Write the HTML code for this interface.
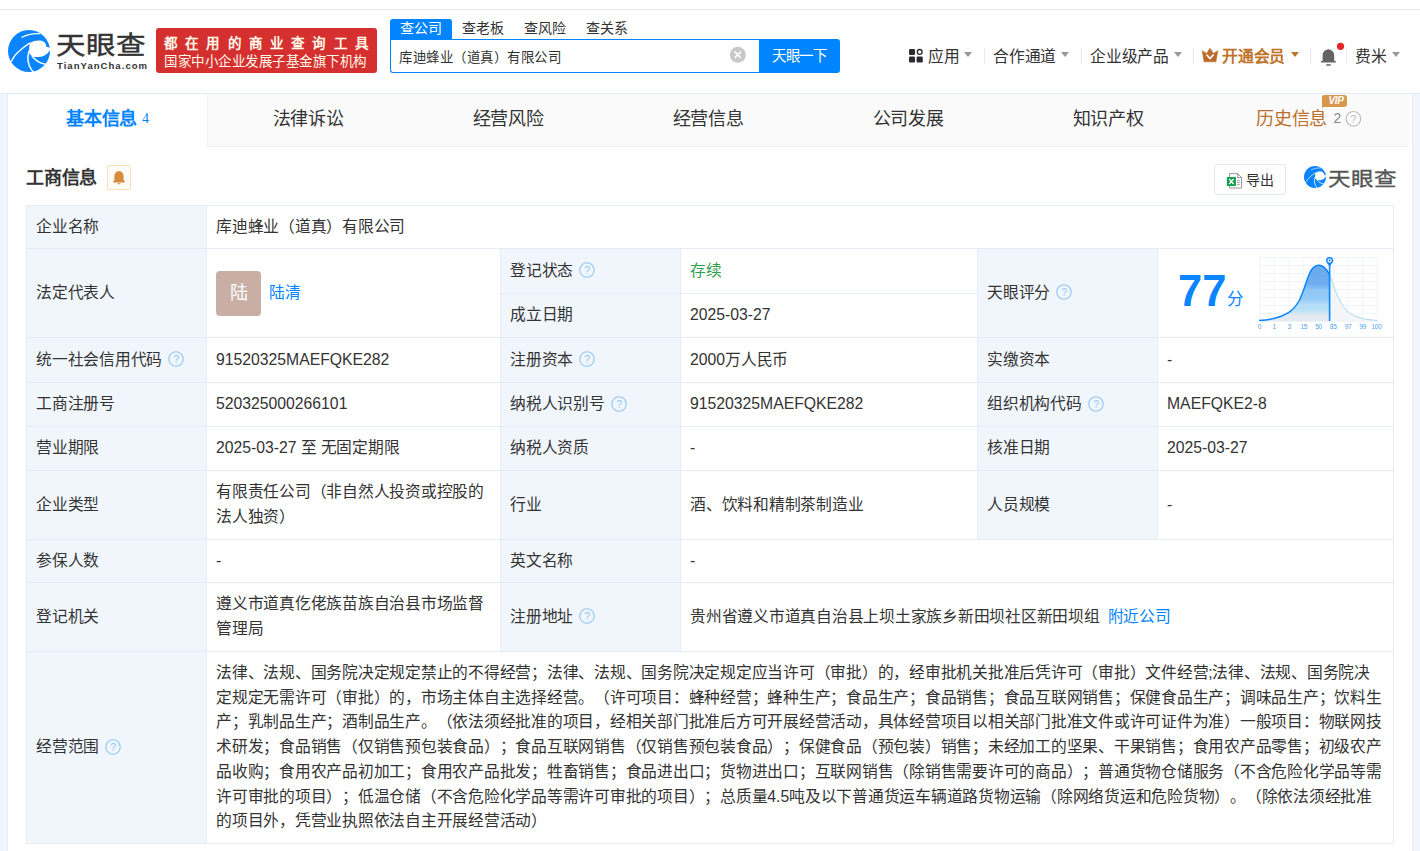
<!DOCTYPE html>
<html lang="zh-CN"><head><meta charset="utf-8">
<style>
*{margin:0;padding:0;box-sizing:border-box}
html,body{width:1420px;height:851px;overflow:hidden;background:#fff}
body{font-family:"Liberation Sans",sans-serif;color:#333;font-size:15.75px;letter-spacing:-0.25px;position:relative;text-spacing-trim:space-all}
.abs{position:absolute}
.topline{left:0;top:9px;width:1420px;height:1px;background:#e3eaf2}
.topshadow{left:0;top:10px;width:1420px;height:2px;background:linear-gradient(#f6f8fb,#fff)}
.strip{top:93px;width:8px;height:758px;background:#f0f6fc}
/* header */
.logo-c{left:8px;top:30px;width:42px;height:42px}
.logo-t{left:56px;top:30.5px;font-size:29.5px;line-height:34px;color:#333;letter-spacing:0;font-weight:normal;-webkit-text-stroke:0.5px #333;white-space:nowrap;transform:scaleY(0.86);transform-origin:0 0}
.logo-s{left:57px;top:60px;font-size:9.5px;line-height:11px;font-weight:bold;letter-spacing:1.05px;color:#333;white-space:nowrap}
.banner{left:156px;top:28px;width:221px;height:45px;background:#d62f2f;border-radius:3px;color:#fff}
.banner .l1{position:absolute;left:8px;top:4px;font-size:13.5px;font-weight:bold;letter-spacing:8.2px;white-space:nowrap;color:#fffbea}
.banner .l2{position:absolute;left:8px;top:21.5px;font-size:13.5px;letter-spacing:0.5px;white-space:nowrap;color:#fffbea;font-weight:500}
.stab{top:19px;height:20px;width:62px;font-size:14px;letter-spacing:-0.2px;line-height:18px;text-align:center;color:#333}
.stab.on{background:#0084ff;color:#fff;border-radius:3px 3px 0 0}
.sbox{left:390px;top:39px;width:370px;height:34px;border:1px solid #0084ff;border-right:none;border-radius:0 0 0 3px}
.sbox .txt{position:absolute;left:8px;top:7.5px;font-size:13.5px;letter-spacing:0.5px;line-height:20px;white-space:nowrap}
.sbtn{left:759px;top:39px;width:81px;height:34px;background:#0084ff;border-radius:0 3px 3px 0;color:#fff;font-size:14.5px;letter-spacing:-0.1px;line-height:34px;text-align:center}
.nav{top:45.5px;font-size:15.75px;line-height:22px;white-space:nowrap;color:#333}
.caret{width:0;height:0;border-left:4.5px solid transparent;border-right:4.5px solid transparent;border-top:5.5px solid #999}
.sep{top:49px;width:1px;height:14px;background:#e4e8ee}
/* tabs */
.tabbar{left:8px;top:93px;width:1401px;height:54px;background:#fafafa;border-top:1px solid #e3eaf2;border-bottom:1px solid #eef2f7}
.tab{top:0;height:53px;width:200px;text-align:center;font-size:18px;line-height:50px;color:#333;white-space:nowrap}
.tab.on{background:#fff;color:#0084ff;font-weight:bold;border-right:1px solid #edf2f8}
.cardr{left:1412px;top:93px;width:1px;height:758px;background:#e5ecf3}
.cardl{left:7px;top:93px;width:1px;height:758px;background:#e5ecf3}
/* section */
.stitle{left:26px;top:165px;font-size:18px;font-weight:bold;color:#333;line-height:26px}
.bellbtn{left:107px;top:165px;width:24px;height:25px;border:1px solid #fce0b3;background:#fdfcf8;border-radius:2px}
.export{left:1214px;top:164px;width:72px;height:31px;border:1px solid #e3e8ef;border-radius:3px;font-size:13.5px}
/* table */
.tb{left:26px;top:205px;width:1368px;height:639px;border:1px solid #e4eaf1}
.c{position:absolute;display:flex;align-items:center;padding-left:9px;line-height:24.75px}
.lb{background:#f1f6fd}
.q{display:inline-block;width:16px;height:16px;margin-left:6px;vertical-align:top;position:relative;top:3.5px}
.n{letter-spacing:0}
a{color:#0084ff;text-decoration:none}
.ln{position:absolute;background:#e6ecf3}
.avatar{width:45px;height:45px;border-radius:4px;background:#c9aea5;color:#fff;font-size:18px;text-align:center;line-height:45px;margin-left:0;position:relative;top:0.5px}
.lq{margin-left:8px}
.score{left:1178px;top:266.5px;font-size:43.5px;font-weight:bold;color:#0a84ff;letter-spacing:0;line-height:48px}
.fen{left:1227px;top:289px;font-size:16.5px;color:#0a84ff;line-height:20px}
</style></head><body>
<div class="abs topline"></div>
<div class="abs topshadow"></div>
<div class="abs strip" style="left:0"></div>
<div class="abs strip" style="left:1413px;width:7px"></div>
<div class="abs cardl"></div>
<div class="abs cardr"></div>
<div class="abs" style="left:0;top:93px;width:1420px;height:1px;background:#e3eaf2"></div>

<!-- HEADER -->
<svg width="0" height="0" style="position:absolute"><defs><symbol id="tyc" viewBox="4 4 42 42">
<circle cx="25" cy="25" r="21" fill="#0a84ff"/>
<path d="M25.9,17 C29,15 33,14.2 36.5,14.6 C40,15.2 42.6,17.6 42.3,20.8 L47,22 L52,18 L52,30 L46.5,23.2 C44.5,27.5 40,30.6 35,31 C31.5,31.2 29.3,30.8 28.2,30 C26.5,28.8 25.2,27.5 25.2,25.9 C25.1,22.5 25.3,19 25.9,17 Z" fill="#fff"/>
<path d="M17.5,11.6 C22,9 30,7.2 36.6,7.7" fill="none" stroke="#fff" stroke-width="1.1"/>
<path d="M7.2,35.8 C9.5,31 12,27.8 14.7,25.6 C18,22.5 22,19 26.3,16.8" fill="none" stroke="#fff" stroke-width="1.3"/>
<path d="M25.4,24.5 C24,28 23.6,32 24.2,35.5 C24.8,39.5 26.8,43.5 29.6,46.5" fill="none" stroke="#fff" stroke-width="1.5"/>
<path d="M27.8,29.6 C29.5,32.2 31.5,34 34,35.6 C36.5,37 39,37.9 41.6,38.2" fill="none" stroke="#fff" stroke-width="1.5"/>
</symbol></defs></svg>
<svg class="abs logo-c"><use href="#tyc"/></svg>
<div class="abs logo-t">天眼查</div>
<div class="abs logo-s">TianYanCha.com</div>
<div class="abs banner"><div class="l1">都在用的商业查询工具</div><div class="l2">国家中小企业发展子基金旗下机构</div></div>

<div class="abs stab on" style="left:390px">查公司</div>
<div class="abs stab" style="left:452px">查老板</div>
<div class="abs stab" style="left:514px">查风险</div>
<div class="abs stab" style="left:576px">查关系</div>
<div class="abs sbox"><div class="txt">库迪蜂业（道真）有限公司</div></div>
<div class="abs sbtn">天眼一下</div>

<div class="abs nav" style="left:928px">应用</div>
<div class="abs nav" style="left:993px">合作通道</div>
<div class="abs nav" style="left:1090px">企业级产品</div>
<div class="abs nav" style="left:1222px;color:#c0732a;font-weight:bold">开通会员</div>
<div class="abs nav" style="left:1355px">费米</div>
<div class="abs sep" style="left:984px"></div>
<div class="abs sep" style="left:1081px"></div>
<div class="abs sep" style="left:1193px"></div>
<div class="abs sep" style="left:1310px"></div>
<div class="abs sep" style="left:1346px"></div>
<div class="abs caret" style="left:964px;top:52px"></div>
<div class="abs caret" style="left:1061px;top:52px"></div>
<div class="abs caret" style="left:1174px;top:52px"></div>
<div class="abs caret" style="left:1291px;top:52px;border-top-color:#c0732a"></div>
<div class="abs caret" style="left:1392px;top:52px"></div>


<svg class="abs" style="left:905px;top:44px" width="22" height="22" viewBox="905 44 22 22">
<rect x="909" y="49" width="6" height="6" rx="1.3" fill="#2b2b30"/>
<rect x="909" y="56.5" width="6" height="6" rx="1.3" fill="#2b2b30"/>
<rect x="916.6" y="56.5" width="6.2" height="6" rx="1.3" fill="#2b2b30"/>
<circle cx="919.7" cy="51.9" r="2.4" fill="none" stroke="#2b2b30" stroke-width="1.3"/>
</svg>
<svg class="abs" style="left:1198px;top:44px" width="24" height="22" viewBox="1198 44 24 22">
<path d="M1202.2,50.8 L1206.6,53.6 L1210,48.2 L1213.4,53.6 L1217.8,50.8 L1215.9,61.8 L1204.1,61.8 Z" fill="#bb6c2c" stroke="#bb6c2c" stroke-width="0.6" stroke-linejoin="round"/>
<path d="M1206.4,54.6 L1210,58.6 L1213.6,54.6" fill="none" stroke="#fff" stroke-width="1.5"/>
</svg>
<svg class="abs" style="left:1315px;top:40px" width="32" height="30" viewBox="1315 40 32 30">
<path d="M1328.4,47.8 L1328.4,49.2 C1325,49.6 1322.6,52 1322.6,55.5 L1322.6,61.1 L1321,61.1 L1321,62.6 L1335.8,62.6 L1335.8,61.1 L1334.2,61.1 L1334.2,55.5 C1334.2,52 1331.8,49.6 1328.4,49.2 Z" fill="#646464"/>
<rect x="1326.3" y="64.2" width="4.4" height="1.5" fill="#646464"/>
<circle cx="1340.5" cy="46.3" r="3.6" fill="#e02626"/>
</svg>
<svg class="abs" style="left:728px;top:45px" width="20" height="20" viewBox="728 45 20 20">
<circle cx="737.8" cy="54.8" r="8" fill="#c8c8c8"/>
<path d="M734.6,51.6 L741,58 M741,51.6 L734.6,58" stroke="#fff" stroke-width="1.6"/>
</svg>

<!-- TABS -->
<div class="abs tabbar">
<div class="abs tab on" style="left:0">基本信息 <span style="font-weight:normal;font-size:14px;font-family:'Liberation Serif',serif;position:relative;top:-2px">4</span></div>
<div class="abs tab" style="left:200px">法律诉讼</div>
<div class="abs tab" style="left:400px">经营风险</div>
<div class="abs tab" style="left:600px">经营信息</div>
<div class="abs tab" style="left:800px">公司发展</div>
<div class="abs tab" style="left:1000px">知识产权</div>
<div class="abs tab" style="left:1248px;width:auto;color:#bb6f2b">历史信息<span style="font-size:14px;color:#888;margin-left:6.5px;position:relative;top:-2px">2</span></div>
</div>


<div class="abs" style="left:1322px;top:95px;width:25px;height:11.5px;background:#d9974b;border-radius:2px 3px 3px 0"></div>
<svg class="abs" style="left:1320px;top:104px" width="6" height="6" viewBox="0 0 6 6"><path d="M2,0 L2,4.5 L6,0 Z" fill="#d9974b"/></svg>
<div class="abs" style="left:1326px;top:95px;width:20px;font-size:10px;line-height:12px;font-weight:bold;font-style:italic;color:#fff;letter-spacing:-0.3px;text-align:center">VIP</div>
<svg class="abs" style="left:1345px;top:110px" width="17" height="17" viewBox="1345 110 17 17">
<circle cx="1353.4" cy="118.8" r="7.3" fill="none" stroke="#bdbdbd" stroke-width="1.1"/>
<text x="1353.4" y="122.6" text-anchor="middle" font-size="10.5" fill="#bdbdbd" font-family="Liberation Sans">?</text>
</svg>

<!-- SECTION -->
<div class="abs stitle">工商信息</div>
<div class="abs bellbtn"></div>
<svg class="abs" style="left:104px;top:162px" width="30" height="30" viewBox="104 162 30 30">
<path d="M1,0" />
<path d="M119,169.8 L119,171 C116,171.3 114.4,173.6 114.4,176.6 L114.4,180.2 L113.2,181.4 L113.2,182.4 L124.8,182.4 L124.8,181.4 L123.6,180.2 L123.6,176.6 C123.6,173.6 122,171.3 119,171 Z" fill="#d98a3a"/><rect x="117.6" y="183.2" width="2.8" height="1" fill="#d98a3a"/>
</svg>
<div class="abs export">
<svg style="position:absolute;left:10px;top:6px" width="18" height="18" viewBox="1224 170 18 18">
<path d="M1228.6,172.6 L1236.6,172.6 L1240.6,176.6 L1240.6,187 L1228.6,187 Z" fill="#fff" stroke="#8a8a8a" stroke-width="0.9"/>
<path d="M1236.6,172.6 L1236.6,176.6 L1240.6,176.6" fill="none" stroke="#8a8a8a" stroke-width="0.9"/>
<path d="M1236,179.4 h2.8 M1236,181.4 h2.8 M1236,183.4 h2.8" stroke="#8a8a8a" stroke-width="0.8"/>
<rect x="1225.9" y="176" width="9" height="9" fill="#11a04f"/>
<path d="M1228.2,178 L1232.6,183 M1232.6,178 L1228.2,183" stroke="#fff" stroke-width="1.3"/>
</svg>
<div style="position:absolute;left:31px;top:6px;font-size:14px;line-height:18px;letter-spacing:0">导出</div>
</div>
<svg class="abs" style="left:1304px;top:166px" width="22" height="22"><use href="#tyc"/></svg>
<div class="abs" style="left:1328px;top:168.5px;font-size:22.5px;line-height:26px;font-weight:normal;-webkit-text-stroke:0.4px #555;color:#555;letter-spacing:0;white-space:nowrap;transform:scaleY(0.86);transform-origin:0 0">天眼查</div>


<!-- TABLE -->
<div class="c lb" style="left:27px;top:206px;width:179px;height:42px;"><div class="in">企业名称</div></div>
<div class="c" style="left:207px;top:206px;width:1186px;height:42px;"><div class="in">库迪蜂业（道真）有限公司</div></div>
<div class="c lb" style="left:27px;top:249px;width:179px;height:88px;"><div class="in">法定代表人</div></div>
<div class="c" style="left:207px;top:249px;width:293px;height:88px;"><div class="in"><div style="display:flex;align-items:center"><div class="avatar">陆</div><a class="lq">陆清</a></div></div></div>
<div class="c lb" style="left:501px;top:249px;width:179px;height:44px;"><div class="in">登记状态<svg class="q" viewBox="0 0 16 16"><circle cx="8" cy="8" r="7.2" fill="none" stroke="#8fc6f4" stroke-width="1.1"/><text x="8" y="12" text-anchor="middle" font-size="10.5" fill="#8fc6f4" font-family="Liberation Sans">?</text></svg></div></div>
<div class="c" style="left:681px;top:249px;width:296px;height:44px;"><div class="in"><span style="color:#2fa04d">存续</span></div></div>
<div class="c lb" style="left:501px;top:294px;width:179px;height:43px;"><div class="in">成立日期</div></div>
<div class="c" style="left:681px;top:294px;width:296px;height:43px;"><div class="in"><span class="n">2025-03-27</span></div></div>
<div class="c lb" style="left:978px;top:249px;width:179px;height:88px;"><div class="in">天眼评分<svg class="q" viewBox="0 0 16 16"><circle cx="8" cy="8" r="7.2" fill="none" stroke="#8fc6f4" stroke-width="1.1"/><text x="8" y="12" text-anchor="middle" font-size="10.5" fill="#8fc6f4" font-family="Liberation Sans">?</text></svg></div></div>
<div class="c" style="left:1158px;top:249px;width:235px;height:88px;"><div class="in"></div></div>
<div class="c lb" style="left:27px;top:338px;width:179px;height:44px;"><div class="in">统一社会信用代码<svg class="q" viewBox="0 0 16 16"><circle cx="8" cy="8" r="7.2" fill="none" stroke="#8fc6f4" stroke-width="1.1"/><text x="8" y="12" text-anchor="middle" font-size="10.5" fill="#8fc6f4" font-family="Liberation Sans">?</text></svg></div></div>
<div class="c" style="left:207px;top:338px;width:293px;height:44px;"><div class="in"><span class="n">91520325MAEFQKE282</span></div></div>
<div class="c lb" style="left:501px;top:338px;width:179px;height:44px;"><div class="in">注册资本<svg class="q" viewBox="0 0 16 16"><circle cx="8" cy="8" r="7.2" fill="none" stroke="#8fc6f4" stroke-width="1.1"/><text x="8" y="12" text-anchor="middle" font-size="10.5" fill="#8fc6f4" font-family="Liberation Sans">?</text></svg></div></div>
<div class="c" style="left:681px;top:338px;width:296px;height:44px;"><div class="in"><span class="n">2000</span>万人民币</div></div>
<div class="c lb" style="left:978px;top:338px;width:179px;height:44px;"><div class="in">实缴资本</div></div>
<div class="c" style="left:1158px;top:338px;width:235px;height:44px;"><div class="in">-</div></div>
<div class="c lb" style="left:27px;top:383px;width:179px;height:43px;"><div class="in">工商注册号</div></div>
<div class="c" style="left:207px;top:383px;width:293px;height:43px;"><div class="in"><span class="n">520325000266101</span></div></div>
<div class="c lb" style="left:501px;top:383px;width:179px;height:43px;"><div class="in">纳税人识别号<svg class="q" viewBox="0 0 16 16"><circle cx="8" cy="8" r="7.2" fill="none" stroke="#8fc6f4" stroke-width="1.1"/><text x="8" y="12" text-anchor="middle" font-size="10.5" fill="#8fc6f4" font-family="Liberation Sans">?</text></svg></div></div>
<div class="c" style="left:681px;top:383px;width:296px;height:43px;"><div class="in"><span class="n">91520325MAEFQKE282</span></div></div>
<div class="c lb" style="left:978px;top:383px;width:179px;height:43px;"><div class="in">组织机构代码<svg class="q" viewBox="0 0 16 16"><circle cx="8" cy="8" r="7.2" fill="none" stroke="#8fc6f4" stroke-width="1.1"/><text x="8" y="12" text-anchor="middle" font-size="10.5" fill="#8fc6f4" font-family="Liberation Sans">?</text></svg></div></div>
<div class="c" style="left:1158px;top:383px;width:235px;height:43px;"><div class="in"><span class="n">MAEFQKE2-8</span></div></div>
<div class="c lb" style="left:27px;top:427px;width:179px;height:43px;"><div class="in">营业期限</div></div>
<div class="c" style="left:207px;top:427px;width:293px;height:43px;"><div class="in"><span class="n">2025-03-27</span> 至 无固定期限</div></div>
<div class="c lb" style="left:501px;top:427px;width:179px;height:43px;"><div class="in">纳税人资质</div></div>
<div class="c" style="left:681px;top:427px;width:296px;height:43px;"><div class="in">-</div></div>
<div class="c lb" style="left:978px;top:427px;width:179px;height:43px;"><div class="in">核准日期</div></div>
<div class="c" style="left:1158px;top:427px;width:235px;height:43px;"><div class="in"><span class="n">2025-03-27</span></div></div>
<div class="c lb" style="left:27px;top:471px;width:179px;height:68px;"><div class="in">企业类型</div></div>
<div class="c" style="left:207px;top:471px;width:293px;height:68px;"><div class="in"><div>有限责任公司（非自然人投资或控股的<br>法人独资）</div></div></div>
<div class="c lb" style="left:501px;top:471px;width:179px;height:68px;"><div class="in">行业</div></div>
<div class="c" style="left:681px;top:471px;width:296px;height:68px;"><div class="in">酒、饮料和精制茶制造业</div></div>
<div class="c lb" style="left:978px;top:471px;width:179px;height:68px;"><div class="in">人员规模</div></div>
<div class="c" style="left:1158px;top:471px;width:235px;height:68px;"><div class="in">-</div></div>
<div class="c lb" style="left:27px;top:540px;width:179px;height:42px;"><div class="in">参保人数</div></div>
<div class="c" style="left:207px;top:540px;width:293px;height:42px;"><div class="in">-</div></div>
<div class="c lb" style="left:501px;top:540px;width:179px;height:42px;"><div class="in">英文名称</div></div>
<div class="c" style="left:681px;top:540px;width:712px;height:42px;"><div class="in">-</div></div>
<div class="c lb" style="left:27px;top:583px;width:179px;height:68px;"><div class="in">登记机关</div></div>
<div class="c" style="left:207px;top:583px;width:293px;height:68px;"><div class="in"><div>遵义市道真仡佬族苗族自治县市场监督<br>管理局</div></div></div>
<div class="c lb" style="left:501px;top:583px;width:179px;height:68px;"><div class="in">注册地址<svg class="q" viewBox="0 0 16 16"><circle cx="8" cy="8" r="7.2" fill="none" stroke="#8fc6f4" stroke-width="1.1"/><text x="8" y="12" text-anchor="middle" font-size="10.5" fill="#8fc6f4" font-family="Liberation Sans">?</text></svg></div></div>
<div class="c" style="left:681px;top:583px;width:712px;height:68px;"><div class="in">贵州省遵义市道真自治县上坝土家族乡新田坝社区新田坝组<a style="margin-left:8px">附近公司</a></div></div>
<div class="c lb" style="left:27px;top:652px;width:179px;height:191px;"><div class="in">经营范围<svg class="q" viewBox="0 0 16 16"><circle cx="8" cy="8" r="7.2" fill="none" stroke="#8fc6f4" stroke-width="1.1"/><text x="8" y="12" text-anchor="middle" font-size="10.5" fill="#8fc6f4" font-family="Liberation Sans">?</text></svg></div></div>
<div class="c" style="left:207px;top:652px;width:1186px;height:191px;"><div class="in"><div style="white-space:nowrap">法律、法规、国务院决定规定禁止的不得经营；法律、法规、国务院决定规定应当许可（审批）的，经审批机关批准后凭许可（审批）文件经营;法律、法规、国务院决<br>定规定无需许可（审批）的，市场主体自主选择经营。（许可项目：蜂种经营；蜂种生产；食品生产；食品销售；食品互联网销售；保健食品生产；调味品生产；饮料生<br>产；乳制品生产；酒制品生产。（依法须经批准的项目，经相关部门批准后方可开展经营活动，具体经营项目以相关部门批准文件或许可证件为准）一般项目：物联网技<br>术研发；食品销售（仅销售预包装食品）；食品互联网销售（仅销售预包装食品）；保健食品（预包装）销售；未经加工的坚果、干果销售；食用农产品零售；初级农产<br>品收购；食用农产品初加工；食用农产品批发；牲畜销售；食品进出口；货物进出口；互联网销售（除销售需要许可的商品）；普通货物仓储服务（不含危险化学品等需<br>许可审批的项目）；低温仓储（不含危险化学品等需许可审批的项目）；总质量<span class="n">4.5</span>吨及以下普通货运车辆道路货物运输（除网络货运和危险货物）。（除依法须经批准<br>的项目外，凭营业执照依法自主开展经营活动）</div></div></div>
<div class="ln" style="left:26px;top:205px;width:1368px;height:1px"></div>
<div class="ln" style="left:26px;top:248px;width:1368px;height:1px"></div>
<div class="ln" style="left:26px;top:337px;width:1368px;height:1px"></div>
<div class="ln" style="left:26px;top:382px;width:1368px;height:1px"></div>
<div class="ln" style="left:26px;top:426px;width:1368px;height:1px"></div>
<div class="ln" style="left:26px;top:470px;width:1368px;height:1px"></div>
<div class="ln" style="left:26px;top:539px;width:1368px;height:1px"></div>
<div class="ln" style="left:26px;top:582px;width:1368px;height:1px"></div>
<div class="ln" style="left:26px;top:651px;width:1368px;height:1px"></div>
<div class="ln" style="left:26px;top:843px;width:1368px;height:1px"></div>
<div class="ln" style="left:500px;top:293px;width:478px;height:1px"></div>
<div class="ln" style="left:26px;top:205px;width:1px;height:639px"></div>
<div class="ln" style="left:1393px;top:205px;width:1px;height:639px"></div>
<div class="ln" style="left:206px;top:205px;width:1px;height:639px"></div>
<div class="ln" style="left:500px;top:248px;width:1px;height:404px"></div>
<div class="ln" style="left:680px;top:248px;width:1px;height:404px"></div>
<div class="ln" style="left:977px;top:248px;width:1px;height:292px"></div>
<div class="ln" style="left:1157px;top:248px;width:1px;height:292px"></div>
<svg class="abs" style="left:1250px;top:250px" width="140" height="85" viewBox="1250 250 140 85">
<defs><linearGradient id="gf" x1="0" y1="265" x2="0" y2="321" gradientUnits="userSpaceOnUse"><stop offset="0" stop-color="#68a9ee"/><stop offset="0.339" stop-color="#6eaef0"/><stop offset="0.446" stop-color="#8fc7f6"/><stop offset="0.607" stop-color="#94caf6"/><stop offset="0.714" stop-color="#b5dff9"/><stop offset="0.804" stop-color="#b9e1f9"/><stop offset="0.911" stop-color="#e3e9ef"/><stop offset="1" stop-color="#e6eaef"/></linearGradient></defs>
<g stroke="#edf4fc" stroke-width="1" fill="none"><line x1="1259.5" y1="257" x2="1259.5" y2="321" /><line x1="1274.25" y1="257" x2="1274.25" y2="321" /><line x1="1289" y1="257" x2="1289" y2="321" /><line x1="1303.75" y1="257" x2="1303.75" y2="321" /><line x1="1318.5" y1="257" x2="1318.5" y2="321" /><line x1="1333.25" y1="257" x2="1333.25" y2="321" /><line x1="1348" y1="257" x2="1348" y2="321" /><line x1="1362.75" y1="257" x2="1362.75" y2="321" /><line x1="1377.5" y1="257" x2="1377.5" y2="321" /><line x1="1259" y1="257.5" x2="1378" y2="257.5" /><line x1="1259" y1="265.5" x2="1378" y2="265.5" /><line x1="1259" y1="273.5" x2="1378" y2="273.5" /><line x1="1259" y1="281.5" x2="1378" y2="281.5" /><line x1="1259" y1="289.5" x2="1378" y2="289.5" /><line x1="1259" y1="297.5" x2="1378" y2="297.5" /><line x1="1259" y1="305.5" x2="1378" y2="305.5" /><line x1="1259" y1="313.5" x2="1378" y2="313.5" /><line x1="1259" y1="321.5" x2="1378" y2="321.5" /></g>
<path d="M1329.6,274.8 C1331.5,279 1333,284 1334.5,288.5 C1336.5,294 1339.5,300 1343.2,306.5 C1346.5,311 1350,313.8 1354.5,315.9 C1358,317.4 1362,318.4 1366,319.2 C1370,319.8 1374,320.2 1377.5,320.5 L1377.5,321 L1329.6,321 Z" fill="#f4f5f7"/>
<path d="M1259.2,320.6 C1265,320 1270,319.3 1274,318.6 C1279,317.6 1284,315.6 1289.3,312.2 C1293,309.5 1296.5,305.5 1299.2,300.5 C1301.5,296 1303,291.5 1304.5,287.5 C1306,283 1307.5,278 1309.5,273.5 C1311.5,269 1314,265.6 1318.5,265.3 C1323,265.2 1326.5,268.5 1329.6,274.8 L1329.6,321 L1259.2,321 Z" fill="url(#gf)"/>
<path d="M1329.6,274.8 C1331.5,279 1333,284 1334.5,288.5 C1336.5,294 1339.5,300 1343.2,306.5 C1346.5,311 1350,313.8 1354.5,315.9 C1358,317.4 1362,318.4 1366,319.2 C1370,319.8 1374,320.2 1377.5,320.5" fill="none" stroke="#aad8f6" stroke-width="1"/>
<path d="M1259.2,320.6 C1265,320 1270,319.3 1274,318.6 C1279,317.6 1284,315.6 1289.3,312.2 C1293,309.5 1296.5,305.5 1299.2,300.5 C1301.5,296 1303,291.5 1304.5,287.5 C1306,283 1307.5,278 1309.5,273.5 C1311.5,269 1314,265.6 1318.5,265.3 C1323,265.2 1326.5,268.5 1329.6,274.8" fill="none" stroke="#0a84ff" stroke-width="1.5"/>
<line x1="1329.6" y1="263" x2="1329.6" y2="321" stroke="#0a84ff" stroke-width="1.6"/>
<path d="M1329.6,257 a3.6,3.6 0 0 1 3.6,3.6 c0,2 -2,3.3 -3.6,6 c-1.6,-2.7 -3.6,-4 -3.6,-6 a3.6,3.6 0 0 1 3.6,-3.6 Z" fill="#0a84ff"/>
<circle cx="1329.6" cy="260.6" r="2.1" fill="#fff"/><circle cx="1329.6" cy="260.6" r="1" fill="#0a84ff"/>
<g font-family="Liberation Sans" font-size="6.5" fill="#4da3f0" text-anchor="middle">
<text x="1259.5" y="329">0</text><text x="1274.3" y="329">1</text><text x="1289.3" y="329">3</text><text x="1303.8" y="329">15</text><text x="1318.5" y="329">50</text><text x="1333.2" y="329">85</text><text x="1348" y="329">97</text><text x="1362.5" y="329">99</text><text x="1376.5" y="329">100</text></g>
</svg>
<div class="abs score">77</div><div class="abs fen">分</div>
</body></html>
